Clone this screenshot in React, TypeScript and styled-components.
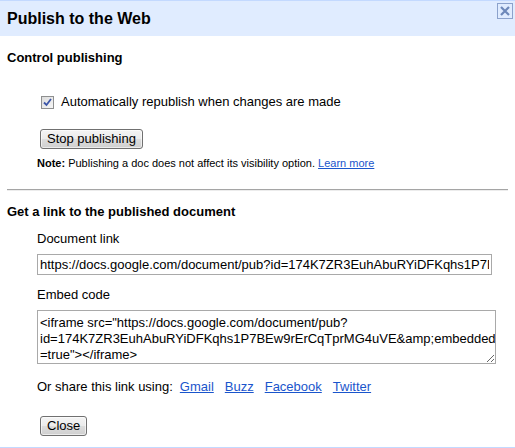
import React from "react";
import styled, { createGlobalStyle } from "styled-components";

const Global = createGlobalStyle`
  html, body { margin: 0; padding: 0; background: #fff; }
  body { font-family: "Liberation Sans", Arial, sans-serif; color: #000; }
`;

const Dialog = styled.div`
  width: 515px;
  height: 448px;
  box-sizing: border-box;
  border-top: 1px solid #c3d9ff;
  border-bottom: 1px solid #c3d9ff;
  display: flex;
  flex-direction: column;
  background: #fff;
`;

const Header = styled.div`
  height: 35px;
  background: #e0ecff;
  display: flex;
  align-items: center;
  justify-content: space-between;
  padding: 0 2px 0 7px;
  position: relative;
`;

const Title = styled.h1`
  margin: 0;
  font-size: 16px;
  font-weight: bold;
  line-height: 20px;
`;

const CloseX = styled.button`
  position: absolute;
  top: 2px;
  right: 2px;
  width: 16px;
  height: 16px;
  padding: 0;
  border: 1px solid #8ca2cc;
  background: #e0ecff;
  display: flex;
  align-items: center;
  justify-content: center;
  box-sizing: border-box;
`;

const Body = styled.div`
  padding: 0 7px;
  display: flex;
  flex-direction: column;
`;

const SectionTitle = styled.h2<{ $top: number }>`
  margin: ${(p) => p.$top}px 0 0;
  font-size: 13px;
  font-weight: bold;
  line-height: 16px;
`;

const Indent = styled.div`
  padding-left: 30px;
  display: flex;
  flex-direction: column;
  align-items: flex-start;
`;

const CheckRow = styled.label`
  margin-top: 28px;
  display: flex;
  align-items: center;
  gap: 7px;
  padding-left: 4px;
  font-size: 13px;
  line-height: 16px;
`;

const CheckBox = styled.span`
  width: 13px;
  height: 13px;
  box-sizing: border-box;
  border: 1px solid #8e8f8f;
  background: linear-gradient(135deg, #dcdcdc, #f6f6f6);
  display: flex;
  align-items: center;
  justify-content: center;
`;

const Button = styled.button<{ $top: number }>`
  margin: ${(p) => p.$top}px 0 0 3px;
  height: 20px;
  padding: 0 6px;
  font-family: "Liberation Sans", Arial, sans-serif;
  font-size: 13px;
  line-height: 16px;
  color: #000;
  border: 1px solid #707070;
  border-radius: 3px;
  background: linear-gradient(#f4f4f4 0%, #ebebeb 50%, #dddddd 51%, #cfcfcf 100%);
  box-shadow: inset 0 0 0 1px rgba(255, 255, 255, 0.6);
`;

const Note = styled.p`
  margin: 7px 0 0;
  font-size: 11px;
  line-height: 14px;
`;

const Link = styled.a`
  color: #1a55cc;
  text-decoration: underline;
`;

const Rule = styled.hr`
  margin: 19px 0 0;
  height: 0;
  border: none;
  border-top: 1px solid #a5a5a5;
  border-bottom: 1px solid #ececec;
  width: 100%;
`;

const Label = styled.div<{ $top: number }>`
  margin-top: ${(p) => p.$top}px;
  font-size: 13px;
  line-height: 16px;
`;

const TextField = styled.input`
  margin-top: 7px;
  width: 455px;
  height: 21px;
  box-sizing: border-box;
  border: 1px solid #a9a9a9;
  padding: 0 2px;
  font-family: "Liberation Sans", Arial, sans-serif;
  font-size: 13px;
  color: #000;
  outline: none;
`;

const TextArea = styled.textarea`
  margin-top: 7px;
  width: 459px;
  height: 54px;
  box-sizing: border-box;
  border: 1px solid #a9a9a9;
  padding: 4px 2px 0;
  font-family: "Liberation Sans", Arial, sans-serif;
  font-size: 13px;
  line-height: 16px;
  color: #000;
  white-space: pre;
  overflow: hidden;
  outline: none;
`;

const ShareRow = styled.div`
  margin-top: 15px;
  display: flex;
  gap: 11px;
  font-size: 13px;
  line-height: 16px;
`;

const ShareLabel = styled.span`
  margin-right: -4px;
`;

const embed =
  '<iframe src="https://docs.google.com/document/pub?\nid=174K7ZR3EuhAbuRYiDFKqhs1P7BEw9rErCqTprMG4uVE&amp;embedded\n=true"></iframe>';

export default function App() {
  return (
    <>
      <Global />
      <Dialog>
        <Header>
          <Title>Publish to the Web</Title>
          <CloseX aria-label="Close">
            <svg width="12" height="12" viewBox="0 0 12 12">
              <path d="M2 2 L10 10 M10 2 L2 10" stroke="#6d88ba" strokeWidth="2.2" />
            </svg>
          </CloseX>
        </Header>
        <Body>
          <SectionTitle $top={14}>Control publishing</SectionTitle>
          <Indent>
            <CheckRow>
              <CheckBox>
                <svg width="9" height="9" viewBox="0 0 9 9">
                  <path d="M1 4.5 L3.5 7 L8 1" fill="none" stroke="#3c56a8" strokeWidth="1.8" />
                </svg>
              </CheckBox>
              Automatically republish when changes are made
            </CheckRow>
            <Button $top={19}>Stop publishing</Button>
            <Note>
              <b>Note:</b> Publishing a doc does not affect its visibility option.{" "}
              <Link href="#">Learn more</Link>
            </Note>
          </Indent>
          <Rule />
          <SectionTitle $top={13}>Get a link to the published document</SectionTitle>
          <Indent>
            <Label $top={11}>Document link</Label>
            <TextField
              readOnly
              value="https://docs.google.com/document/pub?id=174K7ZR3EuhAbuRYiDFKqhs1P7BEw9rErCqTprMG4uVE"
            />
            <Label $top={12}>Embed code</Label>
            <TextArea readOnly value={embed} />
            <ShareRow>
              <ShareLabel>Or share this link using:</ShareLabel>
              <Link href="#">Gmail</Link>
              <Link href="#">Buzz</Link>
              <Link href="#">Facebook</Link>
              <Link href="#">Twitter</Link>
            </ShareRow>
            <Button $top={21}>Close</Button>
          </Indent>
        </Body>
      </Dialog>
    </>
  );
}
